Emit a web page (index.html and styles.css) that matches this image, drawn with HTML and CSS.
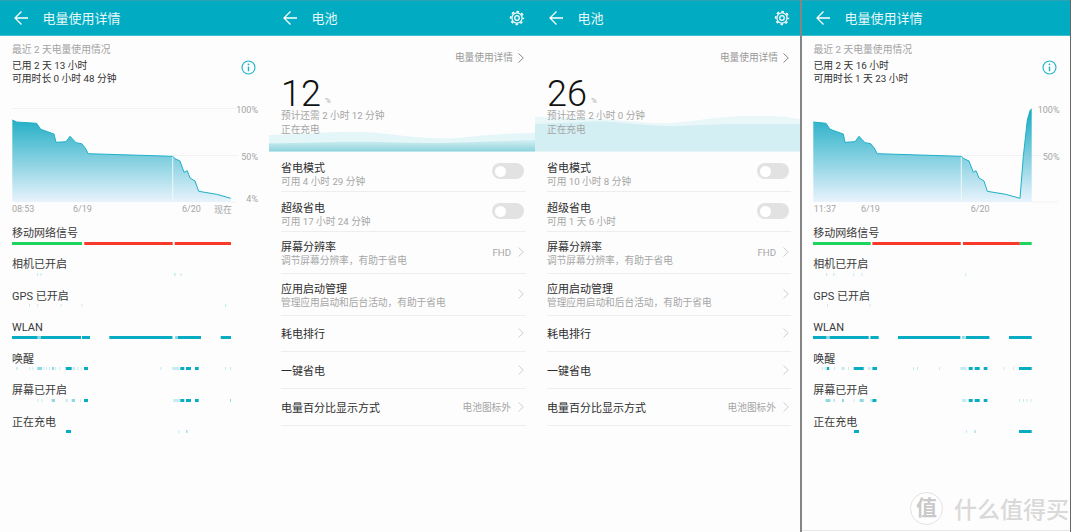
FILE: index.html
```html
<!DOCTYPE html>
<html lang="zh-CN">
<head>
    <meta charset="UTF-8">
    <title>电池</title>
    <link rel="stylesheet" href="styles.css">
</head>
<body>
<svg class="icons">
    <symbol id="back" viewBox="0 0 14 14"><path d="M14 7H1M7.5 .5L1 7l6.5 6.5" fill="none" stroke="currentColor" stroke-width="1.3"/></symbol>
    <symbol id="gear" viewBox="0 0 24 24">
        <g fill="none" stroke="currentColor">
            <circle cx="12" cy="12" r="3.4" stroke-width="1.9"/>
            <circle cx="12" cy="12" r="7.6" stroke-width="1.9"/>
            <circle cx="12" cy="12" r="9.6" stroke-width="2.4" stroke-dasharray="3.77 3.77" stroke-dashoffset="1.9"/>
        </g>
    </symbol>
    <symbol id="info" viewBox="0 0 16 16">
        <circle cx="8" cy="8" r="6.9" fill="none" stroke="currentColor" stroke-width="1.2"/>
        <path d="M8 7v5" stroke="currentColor" stroke-width="1.5"/>
        <circle cx="8" cy="4.6" r="1" fill="currentColor"/>
    </symbol>
    <symbol id="chev" viewBox="0 0 6 10"><path d="M.5 .5L5.3 5 .5 9.5" fill="none" stroke="currentColor" stroke-width="1"/></symbol>
</svg>

<div class="shots">

    <!-- 电量使用详情 -->
    <section class="phone detail w1">
        <header class="bar">
            <svg class="back"><use href="#back"/></svg>
            <h1>电量使用详情</h1>
        </header>
        <div class="summary">
            <p class="recent">最近 2 天电量使用情况</p>
            <div class="used">
                <p>已用 2 天 13 小时<br>可用时长 0 小时 48 分钟</p>
                <svg class="info"><use href="#info"/></svg>
            </div>
        </div>
        <svg class="chart" width="269" height="118" viewBox="0 100 269 118">
            <defs>
                <linearGradient id="fillA" x1="0" y1="0" x2="0" y2="1">
                    <stop offset="0" stop-color="#25afc6"/>
                    <stop offset="1" stop-color="#e8f3fc"/>
                </linearGradient>
            </defs>
            <path class="grid" d="M12 108.5H236M173 155.5H238M231 202H236"/>
            <path fill="url(#fillA)" d="M12.3 120L16.7 122 36.7 123.3 40.7 129.3 54 134 56 142.3 66 141.7 70 136.3 76 142.7 81.7 143.7 85 147.7 88.3 153.7 172.7 156.3 175 158.7 180 161 184 172.3 187.3 170.7 190 178 195 181 198.7 191.3 216.7 194.3 230.7 198.3V202H12.3Z"/>
            <path class="cut" d="M172.7 156.5V202"/>
            <path class="curve" d="M12.3 120L16.7 122 36.7 123.3 40.7 129.3 54 134 56 142.3 66 141.7 70 136.3 76 142.7 81.7 143.7 85 147.7 88.3 153.7 172.7 156.3 175 158.7 180 161 184 172.3 187.3 170.7 190 178 195 181 198.7 191.3 216.7 194.3 230.7 198.3"/>
            <text class="pct" x="258" y="112.5">100%</text>
            <text class="pct" x="258" y="159.5">50%</text>
            <text class="pct" x="258" y="202">4%</text>
            <text x="12" y="212">08:53</text>
            <text x="73" y="212">6/19</text>
            <text x="182" y="212">6/20</text>
            <text x="214" y="213">现在</text>
        </svg>
        <div class="tracks">
            <div class="track">
                <h2>移动网络信号</h2>
                <svg class="strip" viewBox="0 0 232 3"><path class="good" d="M0 1.5H70"/><path class="bad" d="M72.3 1.5H160.7M162.7 1.5H219"/></svg>
            </div>
            <div class="track">
                <h2>相机已开启</h2>
                <svg class="strip" viewBox="0 0 232 3"><path class="faint" d="M25 1.5h1.2M28.5 1.5h1.2M162 1.5h1.6M168.5 1.5h1.2"/></svg>
            </div>
            <div class="track">
                <h2>GPS 已开启</h2>
                <svg class="strip" viewBox="0 0 232 3"><path class="faint" d="M17 1.5h.9M25.3 1.5h.9M48.7 1.5h.9M69.7 1.5h.9M213 1.5h1.2"/></svg>
            </div>
            <div class="track">
                <h2>WLAN</h2>
                <svg class="strip" viewBox="0 0 232 3"><path class="dim" d="M25.5 1.5H28.7M160 1.5h1M163 1.5h2.7"/><path class="on" d="M0 1.5H25.5M28.7 1.5H69M70 1.5H78M97.3 1.5H160M165.7 1.5H189M208.7 1.5H219"/></svg>
            </div>
            <div class="track">
                <h2>唤醒</h2>
                <svg class="strip" viewBox="0 0 232 3"><path class="faint" d="M4.2 1.5h1.6M17 1.5h.9M20.3 1.5h.9M31.3 1.5h1M34 1.5h1M37 1.5h1M43 1.5h1.2M47.3 1.5h1M60.7 1.5H63M65.3 1.5h1M69 1.5h1M148.3 1.5h1M160.3 1.5H167M213 1.5h1M218 1.5h1.2"/><path class="dim" d="M25.3 1.5H30M40 1.5h2"/><path class="on" d="M53.7 1.5H59.7M72 1.5H76M168.3 1.5H172.3M174 1.5H179M183 1.5H186.7"/></svg>
            </div>
            <div class="track">
                <h2>屏幕已开启</h2>
                <svg class="strip" viewBox="0 0 232 3"><path class="faint" d="M25.3 1.5h1M29.3 1.5h1M53.7 1.5h2M68 1.5h1M161.3 1.5H168"/><path class="dim" d="M39.7 1.5H43M59.7 1.5H63M218 1.5h1"/><path class="on" d="M72 1.5H76M168.3 1.5H172.3M174 1.5H179M183 1.5H186.7"/></svg>
            </div>
            <div class="track">
                <h2>正在充电</h2>
                <svg class="strip" viewBox="0 0 232 3"><path class="faint" d="M166.3 1.5h1"/><path class="dim" d="M174.2 1.5h1.2"/><path class="on" d="M54 1.5H59"/></svg>
            </div>
        </div>
    </section>

    <!-- 电池 12% -->
    <section class="phone battery w2">
        <header class="bar">
            <svg class="back"><use href="#back"/></svg>
            <h1>电池</h1>
            <svg class="gear"><use href="#gear"/></svg>
        </header>
        <div class="hero">
            <svg class="wave" viewBox="0 116 266 35.5" preserveAspectRatio="none">
                <defs>
                    <linearGradient id="deep" x1="0" y1="0" x2="0" y2="1">
                        <stop offset="0" stop-color="#d4f0f3"/>
                        <stop offset="1" stop-color="#8dd3dc"/>
                    </linearGradient>
                </defs>
                <path fill="#e5f6f8" d="M0 135C30 134 55 132 82 131.7S135 137 166 138.3 200 134 266 133V151.5H0Z"/>
                <path fill="url(#deep)" d="M0 143.3C40 143 60 141.7 90 141.7S140 143 166 143 220 141 266 140V151.5H0Z"/>
            </svg>
            <a class="more">电量使用详情<svg class="chev dark"><use href="#chev"/></svg></a>
            <div class="level"><b>12</b><span>%</span></div>
            <p>预计还需 2 小时 12 分钟</p>
            <p>正在充电</p>
        </div>
        <div class="row">
            <div class="row-text"><h3>省电模式</h3><p>可用 4 小时 29 分钟</p></div>
            <i class="switch"></i>
        </div>
        <div class="row">
            <div class="row-text"><h3>超级省电</h3><p>可用 17 小时 24 分钟</p></div>
            <i class="switch"></i>
        </div>
        <div class="row tall">
            <div class="row-text"><h3>屏幕分辨率</h3><p>调节屏幕分辨率，有助于省电</p></div>
            <span class="value">FHD</span><svg class="chev"><use href="#chev"/></svg>
        </div>
        <div class="row tall">
            <div class="row-text"><h3>应用启动管理</h3><p>管理应用启动和后台活动，有助于省电</p></div>
            <svg class="chev"><use href="#chev"/></svg>
        </div>
        <div class="row plain">
            <div class="row-text"><h3>耗电排行</h3></div>
            <svg class="chev"><use href="#chev"/></svg>
        </div>
        <div class="row plain">
            <div class="row-text"><h3>一键省电</h3></div>
            <svg class="chev"><use href="#chev"/></svg>
        </div>
        <div class="row plain">
            <div class="row-text"><h3>电量百分比显示方式</h3></div>
            <span class="value">电池图标外</span><svg class="chev"><use href="#chev"/></svg>
        </div>
    </section>

    <!-- 电池 26% -->
    <section class="phone battery w3">
        <header class="bar">
            <svg class="back"><use href="#back"/></svg>
            <h1>电池</h1>
            <svg class="gear"><use href="#gear"/></svg>
        </header>
        <div class="hero">
            <svg class="wave" viewBox="0 116 265 35.5" preserveAspectRatio="none">
                <path fill="#e9f7f9" d="M0 116.7C40 117 70 119 110 122.5S170 116 216 116 250 118 265 119V151.5H0Z"/>
                <path fill="#d3eff3" d="M0 124C30 123 50 121.5 66 121.5S110 126 133 126 180 124 200 124 240 124 265 124V151.5H0Z"/>
            </svg>
            <a class="more">电量使用详情<svg class="chev dark"><use href="#chev"/></svg></a>
            <div class="level"><b>26</b><span>%</span></div>
            <p>预计还需 2 小时 0 分钟</p>
            <p>正在充电</p>
        </div>
        <div class="row">
            <div class="row-text"><h3>省电模式</h3><p>可用 10 小时 8 分钟</p></div>
            <i class="switch"></i>
        </div>
        <div class="row">
            <div class="row-text"><h3>超级省电</h3><p>可用 1 天 6 小时</p></div>
            <i class="switch"></i>
        </div>
        <div class="row tall">
            <div class="row-text"><h3>屏幕分辨率</h3><p>调节屏幕分辨率，有助于省电</p></div>
            <span class="value">FHD</span><svg class="chev"><use href="#chev"/></svg>
        </div>
        <div class="row tall">
            <div class="row-text"><h3>应用启动管理</h3><p>管理应用启动和后台活动，有助于省电</p></div>
            <svg class="chev"><use href="#chev"/></svg>
        </div>
        <div class="row plain">
            <div class="row-text"><h3>耗电排行</h3></div>
            <svg class="chev"><use href="#chev"/></svg>
        </div>
        <div class="row plain">
            <div class="row-text"><h3>一键省电</h3></div>
            <svg class="chev"><use href="#chev"/></svg>
        </div>
        <div class="row plain">
            <div class="row-text"><h3>电量百分比显示方式</h3></div>
            <span class="value">电池图标外</span><svg class="chev"><use href="#chev"/></svg>
        </div>
    </section>

    <div class="rule"></div>

    <!-- 充满之后的电量使用详情 -->
    <section class="phone detail w4">
        <header class="bar">
            <svg class="back"><use href="#back"/></svg>
            <h1>电量使用详情</h1>
        </header>
        <div class="summary">
            <p class="recent">最近 2 天电量使用情况</p>
            <div class="used">
                <p>已用 2 天 16 小时<br>可用时长 1 天 23 小时</p>
                <svg class="info"><use href="#info"/></svg>
            </div>
        </div>
        <svg class="chart" width="268" height="118" viewBox="2 100 268 118">
            <defs>
                <linearGradient id="fillB" x1="0" y1="0" x2="0" y2="1">
                    <stop offset="0" stop-color="#14a9c2"/>
                    <stop offset="1" stop-color="#e8f3fc"/>
                </linearGradient>
            </defs>
            <path class="grid" d="M162 155.5H240M232 202H258"/>
            <path fill="url(#fillB)" d="M13.3 122L26 123.3 30 129.3 43.3 134 45 142.3 55 141.7 59 136.3 65 142.7 70.7 143.7 74 147.7 77.3 153.7 161.3 156.3 164 158.7 169 161 173.3 172.3 176 170.7 179 178 184 181 187.3 191.3 205.7 194.3 220 198.3 223.3 156.7 227.3 120 230 110.7 231.7 108.7V202H13.3Z"/>
            <path class="cut" d="M161.3 156.5V202"/>
            <path class="curve" d="M13.3 122L26 123.3 30 129.3 43.3 134 45 142.3 55 141.7 59 136.3 65 142.7 70.7 143.7 74 147.7 77.3 153.7 161.3 156.3 164 158.7 169 161 173.3 172.3 176 170.7 179 178 184 181 187.3 191.3 205.7 194.3 220 198.3 223.3 156.7 227.3 120 230 110.7 231.7 108.7"/>
            <text class="pct" x="259.5" y="112.5">100%</text>
            <text class="pct" x="259.5" y="159.5">50%</text>
            <text x="13.7" y="212">11:37</text>
            <text x="61" y="212">6/19</text>
            <text x="170.7" y="212">6/20</text>
        </svg>
        <div class="tracks">
            <div class="track">
                <h2>移动网络信号</h2>
                <svg class="strip" viewBox="0 0 232 3"><path class="good" d="M0 1.5H57.7M206.7 1.5H218.7"/><path class="bad" d="M59.4 1.5H147.7M150 1.5H206.7"/></svg>
            </div>
            <div class="track">
                <h2>相机已开启</h2>
                <svg class="strip" viewBox="0 0 232 3"><path class="faint" d="M13 1.5h1.2M20.3 1.5h1.2M40.3 1.5h1M48.6 1.5h1M152.3 1.5h1"/></svg>
            </div>
            <div class="track">
                <h2>GPS 已开启</h2>
                <svg class="strip" viewBox="0 0 232 3"><path class="faint" d="M14 1.5h.9M56.7 1.5h.9"/></svg>
            </div>
            <div class="track">
                <h2>WLAN</h2>
                <svg class="strip" viewBox="0 0 232 3"><path class="dim" d="M13.4 1.5H16.7M149 1.5H151.7"/><path class="on" d="M0 1.5H13.4M16.7 1.5H55.7M57.4 1.5H65.7M85 1.5H147.4M152.7 1.5H176.4M196 1.5H218.7"/></svg>
            </div>
            <div class="track">
                <h2>唤醒</h2>
                <svg class="strip" viewBox="0 0 232 3"><path class="faint" d="M9 1.5h1M11.7 1.5H16.7M21 1.5h1M28.4 1.5H31.7M35 1.5h1M55 1.5H57.4M100 1.5h1M104 1.5h1M126 1.5h1M147.4 1.5H153.4M190.7 1.5h1M200 1.5h1"/><path class="on" d="M14 1.5h2M40.7 1.5H50.7M59.4 1.5H64M155.7 1.5H159.7M161.7 1.5H166.7M170.7 1.5H174.4M206 1.5H218.7"/></svg>
            </div>
            <div class="track">
                <h2>屏幕已开启</h2>
                <svg class="strip" viewBox="0 0 232 3"><path class="faint" d="M40.7 1.5h1M149 1.5H153.4M206 1.5h1M210 1.5h1M213.4 1.5h1M217.4 1.5h1"/><path class="dim" d="M12.7 1.5H17.4M20.7 1.5h1M29 1.5h2M46.7 1.5H50.7M57.4 1.5h1"/><path class="on" d="M59.4 1.5H63.4M155.7 1.5H159.7M161.7 1.5H166.7M170.7 1.5H174.4"/></svg>
            </div>
            <div class="track">
                <h2>正在充电</h2>
                <svg class="strip" viewBox="0 0 232 3"><path class="faint" d="M153 1.5h1"/><path class="dim" d="M161.6 1.5h1"/><path class="on" d="M41 1.5H46M206 1.5H218.7"/></svg>
            </div>
        </div>
    </section>

    <div class="rule thin"></div>

    <!-- 角落水印 -->
    <div class="mark">
        <span class="mark-logo">值</span>
        <span class="mark-name">什么值得买</span>
    </div>
</div>
</body>
</html>
```

FILE: styles.css
```css
*{
    margin:0;
    padding:0;
    box-sizing:border-box;
}
body{
    background:#fff;
    overflow:hidden;
    font-family:Roboto,"Noto Sans CJK SC",sans-serif;
}
.icons{
    display:none;
}
.shots{
    position:relative;
    display:flex;
    height:532px;
}
.phone{
    flex:none;
    height:532px;
    background:#fdfdfd;
}
.w1{width:269px;}
.w2{width:266px;}
.w3{width:265px;}
.w4{
    width:268px;
    height:531px;
    border-bottom:1px solid #e6e6e6;
}
.rule{
    flex:none;
    width:2px;
    background:#858585;
}
.rule.thin{
    width:1px;
    background:#666;
}

/* 顶栏 */
.bar{
    display:flex;
    align-items:center;
    height:36px;
    padding-left:13.5px;
    color:#fff;
    background:#01acc2;
    border-top:1px solid #2ba3b4;
    border-bottom:1px solid #3fbfd0;
}
.bar h1{
    flex:1;
    margin:0 0 2px 15px;
    font-size:13px;
    font-weight:400;
    color:#e6f7f9;
}
.back{
    width:14px;
    height:14px;
}
.gear{
    width:16px;
    height:16px;
    margin-right:10px;
}

/* 电量使用详情 */
.summary{
    padding:6.5px 13px 0 12px;
    font-size:9.8px;
    line-height:13px;
}
.w4 .summary{
    padding-left:11.5px;
}
.recent{
    color:#a3a3a3;
}
.used{
    display:flex;
    justify-content:space-between;
    align-items:flex-start;
    height:26px;
    margin-top:3px;
    color:#333;
}
.info{
    width:15px;
    height:15px;
    margin-top:1px;
    color:#1fb4c9;
}
.chart{
    display:block;
    margin-top:15.5px;
    font-size:9px;
    fill:#a5a5a5;
}
.pct{
    text-anchor:end;
}
.grid{
    fill:none;
    stroke:#f2f2f2;
    stroke-width:1;
}
.curve{
    fill:none;
    stroke:#1fb0c8;
    stroke-width:1;
}
.cut{
    fill:none;
    stroke:#eef8fa;
    stroke-width:1;
}
.tracks{
    margin-top:7px;
    padding-left:12px;
}
.w4 .tracks{
    padding-left:11.3px;
}
.track{
    height:31.45px;
}
.track h2{
    font-size:11px;
    font-weight:400;
    line-height:17px;
    color:#3a3a3a;
}
.strip{
    display:block;
    width:232px;
    height:3px;
    margin-top:-.5px;
}
.strip path{
    fill:none;
    stroke-width:3;
}
.good{stroke:#1cd45e;}
.bad{stroke:#f93a2b;}
.on{stroke:#08adc3;}
.dim{stroke:#8ed8e2;}
.faint{stroke:#c6ebf0;}

/* 电池 */
.hero{
    position:relative;
    height:115.5px;
    padding:15.5px 0 0 12px;
    font-size:9.7px;
    line-height:14px;
    color:#a6a6a6;
}
.hero > *{
    position:relative;
}
.hero > .wave{
    position:absolute;
    left:0;
    bottom:0;
    width:100%;
    height:35.5px;
}
.more{
    display:flex;
    justify-content:flex-end;
    align-items:center;
    height:13px;
    padding-right:11px;
    color:#999;
}
.level{
    display:flex;
    align-items:flex-end;
    height:28px;
    margin:15px 0 1.5px;
}
.level b{
    font-size:36px;
    font-weight:300;
    line-height:28px;
    color:#111;
}
.level span{
    margin-left:4px;
    padding-bottom:2px;
    font-size:8px;
    line-height:10px;
    color:#aaa;
}
.row{
    display:flex;
    align-items:center;
    height:40px;
    margin:0 9px 0 12px;
    padding-right:2px;
    border-bottom:1px solid #eee;
}
.row.tall{
    height:42px;
}
.row.plain{
    height:36.7px;
}
.row-text{
    flex:1;
    margin-top:6px;
}
.row.tall .row-text{
    margin-top:3px;
}
.row.plain .row-text{
    margin-top:3px;
}
.row-text h3{
    font-size:11px;
    font-weight:400;
    line-height:17px;
    color:#2e2e2e;
}
.row-text p{
    margin-top:-2px;
    font-size:9.7px;
    line-height:14px;
    color:#a6a6a6;
}
.switch{
    display:block;
    width:32px;
    height:16px;
    padding:2.5px;
    border-radius:8px;
    background:#e2e2e2;
}
.switch::before{
    content:"";
    display:block;
    width:11px;
    height:11px;
    border-radius:50%;
    background:#fff;
}
.value{
    font-size:9.7px;
    color:#a6a6a6;
}
.chev{
    flex:none;
    width:6px;
    height:10px;
    margin-left:7px;
    color:#cfcfcf;
}
.chev.dark{
    margin-left:5px;
    color:#888;
}

/* 水印 */
.mark{
    position:absolute;
    left:910px;
    top:489px;
    display:flex;
    align-items:center;
    gap:11px;
    color:#d9d9d9;
}
.mark-logo{
    display:block;
    width:33px;
    height:33px;
    border-radius:50%;
    border:1px solid #e2e2e2;
    background:#fff;
    font-size:21px;
    font-weight:700;
    line-height:31px;
    text-align:center;
    color:#c9c9c9;
}
.mark-name{
    padding-top:5px;
    font-size:23px;
    font-weight:500;
    line-height:33px;
}
```
